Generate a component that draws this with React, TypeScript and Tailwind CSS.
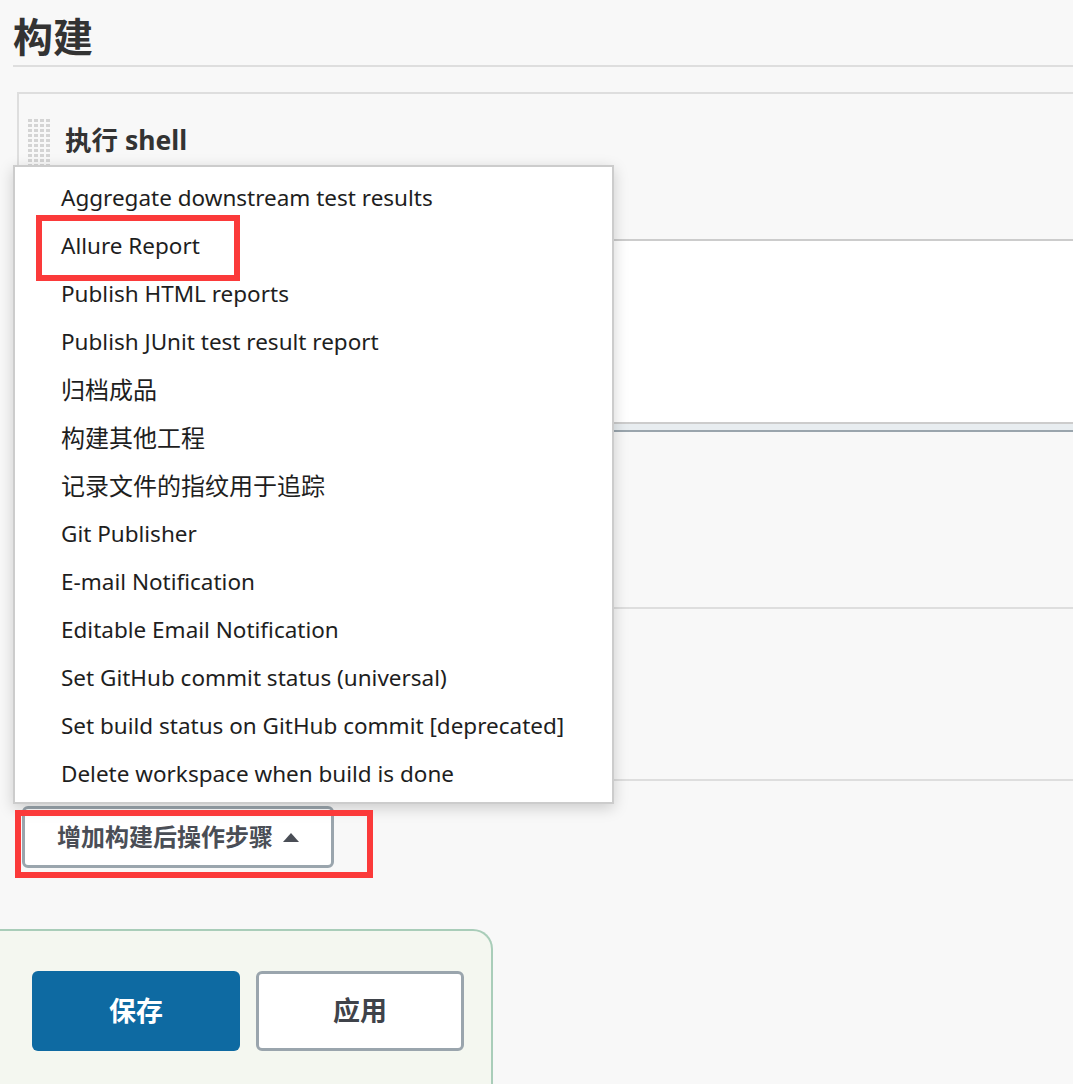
import React from 'react';

const menuItems = [
  'Aggregate downstream test results',
  'Allure Report',
  'Publish HTML reports',
  'Publish JUnit test result report',
  '归档成品',
  '构建其他工程',
  '记录文件的指纹用于追踪',
  'Git Publisher',
  'E-mail Notification',
  'Editable Email Notification',
  'Set GitHub commit status (universal)',
  'Set build status on GitHub commit [deprecated]',
  'Delete workspace when build is done',
];

const font = { fontFamily: '"Noto Sans", "Noto Sans CJK SC", sans-serif' };

// CJK entries render a bit larger in the original (YaHei fallback)
const isCjk = (s: string) => /[\u4e00-\u9fff]/.test(s);

const DragHandle = () => (
  <div className="grid grid-cols-4 gap-[2px] w-[22px]">
    {Array.from({ length: 40 }).map((_, i) => (
      <span key={i} className="w-[4px] h-[3px] bg-[#d4d4d4]" />
    ))}
  </div>
);

const App: React.FC = () => {
  return (
    <div className="relative w-[1073px] h-[1084px] overflow-hidden bg-[#f8f8f8] text-[#333]" style={font}>
      {/* section title */}
      <div className="pl-[13px] pt-[13px]">
        <h1 className="text-[40px] font-bold leading-[48px] text-[#333] border-b-2 border-[#dedede] pb-[4px]">构建</h1>
      </div>

      {/* build step box */}
      <div className="ml-[17px] mt-[25px] border-t-2 border-l-2 border-[#dedede]">
        <div className="flex items-start gap-[15px] pl-[9px] pt-[25px] h-[145px]">
          <DragHandle />
          <div className="text-[26.5px] font-bold leading-[32px] mt-[5px]">执行 shell</div>
        </div>
        <div className="h-[183px] bg-white border-t-2 border-[#cccccc]" />
        <div className="h-[10px] bg-[#e8edf0] border-t-2 border-[#cccccc] border-b-2 border-b-[#9aa5ad]" />
        <div className="h-[177px] border-b-2 border-[#dedede]" />
        <div className="h-[172px] border-b-2 border-[#dedede]" />
      </div>

      {/* add post-build step */}
      <div className="pl-[22px] pt-[25px]">
        <button className="flex items-center gap-[10px] h-[62px] w-[312px] pl-[32px] bg-white border-[3px] border-[#9aa5ad] rounded-[6px] text-[24px] font-bold text-[#4a4e56]">
          增加构建后操作步骤
          <svg width="16" height="9" viewBox="0 0 16 9"><path d="M0 9 L8 0 L16 9 Z" fill="#4a4e56" /></svg>
        </button>
      </div>

      {/* bottom save bar */}
      <div className="mt-[61px] w-[493px] h-[200px] bg-[#f4f7f0] border-t-2 border-r-2 border-[#a9cdb9] rounded-tr-[20px] pl-[32px] pt-[40px] flex gap-[16px]">
        <button className="w-[208px] h-[80px] rounded-[6px] bg-[#0e6aa2] text-white text-[27px] font-bold">保存</button>
        <button className="w-[208px] h-[80px] rounded-[6px] bg-white border-[3px] border-[#9aa5ad] text-[#3f434a] text-[27px] font-bold">应用</button>
      </div>

      {/* dropdown menu */}
      <div className="absolute left-[13px] top-[165px] w-[601px] h-[639px] bg-white border-2 border-[#cccccc] shadow-[0_4px_14px_rgba(0,0,0,0.18)] pt-[7px]">
        {menuItems.map((item) => (
          <div
            key={item}
            className={`h-[48px] pl-[46px] leading-[48px] text-[#1e1e1e] ${isCjk(item) ? 'text-[24px]' : 'text-[22.5px]'}`}
          >
            {item}
          </div>
        ))}
      </div>

      {/* annotation highlights */}
      <div className="absolute left-[36px] top-[215px] w-[204px] h-[66px] border-[6px] border-[#fb3a3a]" />
      <div className="absolute left-[15px] top-[810px] w-[358px] h-[68px] border-[6px] border-[#fb3a3a]" />
    </div>
  );
};

export default App;
